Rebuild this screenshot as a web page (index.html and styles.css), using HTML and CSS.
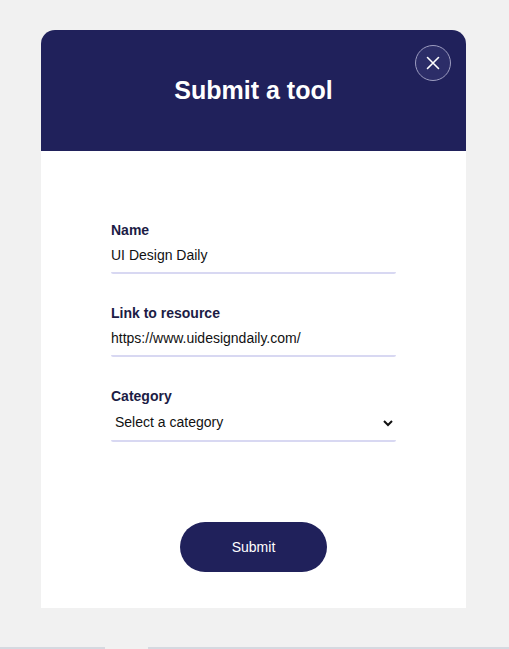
FILE: index.html
```html
<html>
<head>
  <meta name="viewport" content="width=device-width, initial-scale=1.0">
<link rel="stylesheet" href="styles.css">
</head>
<body>

<div class="modal">
  <div class="modal-header">
    <h1 class="modal-title">Submit a tool</h1>
    <button class="close-btn" aria-label="Close">
      <svg width="14" height="14" viewBox="0 0 14 14">
        <path d="M1.5 1.5 L12.5 12.5 M12.5 1.5 L1.5 12.5" stroke="#fff" stroke-width="1.6" stroke-linecap="round"/>
      </svg>
    </button>
  </div>

  <form class="modal-body">
    <div class="field">
      <label for="name">Name</label>
      <input type="text" id="name" class="input" value="UI Design Daily">
    </div>
    <div class="field">
      <label for="link">Link to resource</label>
      <input type="text" id="link" class="input" value="https://www.uidesigndaily.com/">
    </div>
    <div class="field">
      <label for="category">Category</label>
      <select id="category" class="input select">
        <option>Select a category</option>
        <option>Icons</option>
        <option>Fonts</option>
        <option>Colors</option>
      </select>
    </div>
    <div class="actions">
      <button type="button" class="submit-btn">Submit</button>
    </div>
  </form>
</div>

<div class="page-bar">
  <div class="bar-seg bar-left"></div>
  <div class="bar-seg bar-right"></div>
</div>

</body>
</html>
```

FILE: styles.css
```css
body {
  margin: 0;
  background: #f1f1f1;
  font-family: "Liberation Sans", Arial, sans-serif;
}

.modal {
  position: relative;
  width: 425px;
  margin: 30px 0 0 41px;
  background: #fff;
  border-radius: 14px 14px 0 0;
}

.modal-header {
  height: 121px;
  background: #20215b;
  border-radius: 14px 14px 0 0;
  display: flex;
  align-items: center;
  justify-content: center;
}

.modal-title {
  margin: 0;
  color: #fff;
  font-size: 25px;
  font-weight: bold;
}

.close-btn {
  position: absolute;
  top: 15px;
  right: 15px;
  width: 36px;
  height: 36px;
  padding: 0;
  border: 1px solid #9c9cc0;
  border-radius: 50%;
  background: #2c2d68;
  display: flex;
  align-items: center;
  justify-content: center;
  cursor: pointer;
}

.modal-body {
  margin: 0;
  padding: 71px 70px 36px 70px; /*t,r,b,l */
}

.field {
  margin-bottom: 31px;
}

.field label {
  display: block;
  font-size: 14px;
  line-height: 16px;
  font-weight: bold;
  color: #1c1c45;
}

.input {
  display: block;
  width: 100%;
  box-sizing: border-box;
  border: none;
  border-bottom: 2px solid #d8d8f2;
  border-radius: 0 0 2px 2px;
  padding: 9px 0;
  font-family: "Liberation Sans", Arial, sans-serif;
  font-size: 14px;
  line-height: 16px;
  color: #111;
  background: #fff;
  outline: none;
}

.select {
  padding: 0;
  height: 38px;
}

.actions {
  display: flex;
  justify-content: center;
  margin-top: 80px;
}

.submit-btn {
  width: 147px;
  height: 50px;
  border: none;
  border-radius: 25px;
  background: #20215b;
  color: #fff;
  font-family: "Liberation Sans", Arial, sans-serif;
  font-size: 14px;
  cursor: pointer;
}

.page-bar {
  display: flex;
  gap: 43px;
  margin-top: 39px;
}

.bar-seg {
  height: 3px;
  background: #d5d9e0;
}

.bar-left {
  width: 105px;
}

.bar-right {
  flex: 1;
}
```
